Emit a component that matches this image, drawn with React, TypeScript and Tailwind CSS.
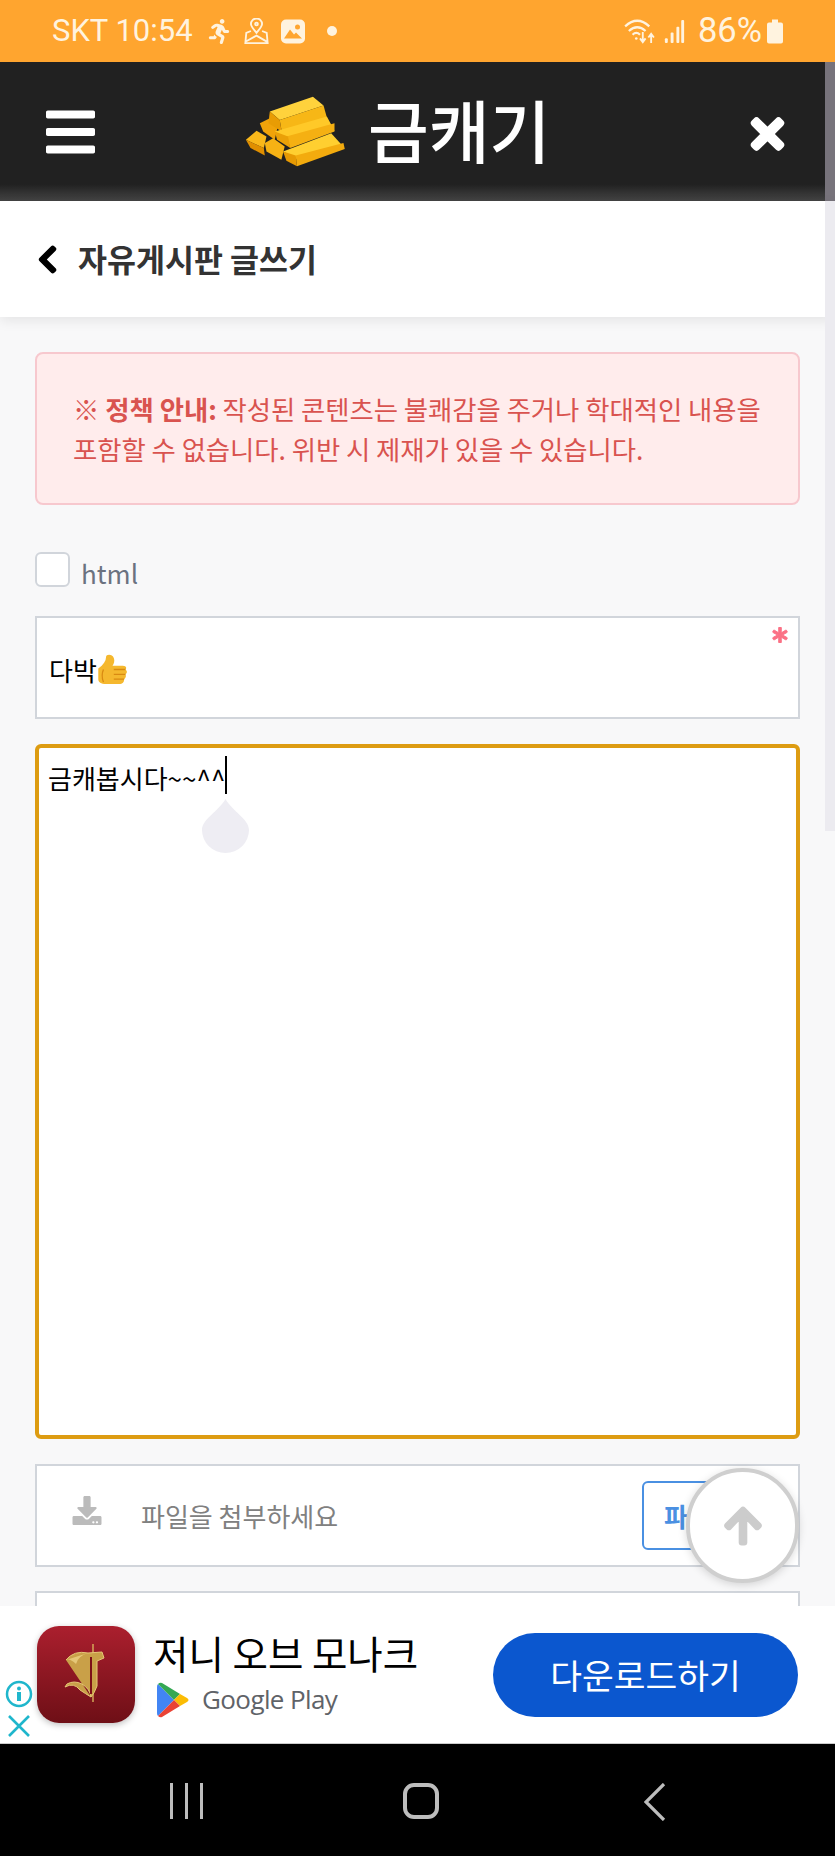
import { FaArrowUp, FaAsterisk, FaBars, FaChevronLeft, FaDownload, FaRunning, FaTimes } from 'react-icons/fa'

function GoldBars() {
  return (
    <svg viewBox="70 80 315 220" className="w-[105px] h-[73px]">
      {/* back left small bars */}
      <polygon points="120,165 150,150 175,170 165,215 130,190" fill="#f0a30a" />
      <polygon points="78,215 110,188 140,205 132,240" fill="#f9b81a" />
      <polygon points="78,215 132,240 135,262 92,240" fill="#e08f00" />
      <polygon points="135,225 160,210 195,235 185,275 140,250" fill="#f6b214" />
      {/* top bar */}
      <polygon points="150,130 280,85 312,112 180,155" fill="#ffd23c" />
      <polygon points="180,155 312,112 322,148 186,190" fill="#f7b716" />
      <polygon points="150,130 180,155 186,190 146,165" fill="#e89c04" />
      {/* middle bar */}
      <polygon points="165,190 322,145 345,188 210,225" fill="#ffc928" />
      <polygon points="200,205 345,165 345,190 212,240" fill="#f5b012" />
      <polygon points="165,190 205,205 212,240 172,215" fill="#eaa007" />
      {/* bottom bar */}
      <polygon points="190,250 335,195 372,236 232,272" fill="#ffcf30" />
      <polygon points="228,262 372,225 376,243 232,295" fill="#f3ab0e" />
      <polygon points="190,250 228,262 232,295 200,278" fill="#e79a03" />
    </svg>
  )
}

function ThumbsUp() {
  return (
    <svg viewBox="7 0 24 32" preserveAspectRatio="none" className="w-[31px] h-[31px]">
      <path d="M8 15 C12 11 14 7 14 3 C14 0 19 0 20 4 C21 7 20 10 19 12 L27 12 C30 12 30 15 29 16 C31 18 30 20 29 21 C30 23 29 25 28 26 C28 29 27 31 24 31 L14 31 C10 31 8 29 8 26 Z" fill="#f5b82e" />
      <path d="M20 16 H29 M20 21 H29 M20 26 H28" stroke="#d98a12" strokeWidth="1.4" fill="none" />
      <path d="M12 16 Q10 22 12 29" stroke="#d98a12" strokeWidth="1" fill="none" />
    </svg>
  )
}

function PlayLogo() {
  return (
    <svg viewBox="0 0 32 36" className="w-[32px] h-[36px]">
      <path d="M1 2 L17 18 L1 34 Q0 33 0 31 L0 5 Q0 3 1 2 Z" fill="#4285f4" />
      <path d="M1 2 Q3 0 5 1 L23 12 L17 18 Z" fill="#34a853" />
      <path d="M23 12 L30 16 Q33 18 30 20 L23 24 L17 18 Z" fill="#fbbc04" />
      <path d="M1 34 Q3 36 5 35 L23 24 L17 18 Z" fill="#ea4335" />
    </svg>
  )
}

export default function App() {
  return (
    <div className="relative w-[835px] h-[1856px] overflow-hidden flex flex-col bg-[#f8f8f9] font-['Noto_Sans_CJK_KR','Noto_Sans',sans-serif]">
      {/* status bar */}
      <div className="h-[62px] shrink-0 bg-[#ffa52f] flex items-center pl-[52px] pr-[52px] text-[#fff3df] font-['Roboto','Noto_Sans_CJK_KR',sans-serif] text-[31px]">
        <span>SKT 10:54</span>
        <FaRunning className="ml-[15px] w-[22px] h-[25px]" />
        <svg viewBox="0 0 26 28" className="ml-[14px] w-[25px] h-[26px]" fill="none" stroke="currentColor" strokeWidth="2">
          <path d="M13 16 C9 11 7 9 7 6.5 A6 6 0 0 1 19 6.5 C19 9 17 11 13 16 Z" />
          <circle cx="13" cy="6.5" r="1.5" />
          <path d="M7 14 L2 16 L1 27 H25 L24 16 L19 14 M2 25 L13 19 L25 26" />
        </svg>
        <svg viewBox="0 0 24 24" className="ml-[12px] w-[24px] h-[25px]">
          <rect width="24" height="24" rx="5" fill="currentColor" />
          <circle cx="16.5" cy="7.5" r="2.5" fill="#ffa52f" />
          <path d="M3 19 L9 10 L13 15 L15 13 L21 19 Z" fill="#ffa52f" />
        </svg>
        <span className="ml-[22px] w-[10px] h-[10px] rounded-full bg-current" />
        <svg viewBox="0 0 34 28" className="ml-auto w-[34px] h-[26px]" fill="none" stroke="currentColor" strokeWidth="2.4">
          <path d="M1 9 Q14 -3 27 9" />
          <path d="M5 14 Q14 6 23 14" />
          <path d="M9 18 Q13 14 17 18" />
          <circle cx="13" cy="22" r="1.4" fill="currentColor" stroke="none" />
          <path d="M20 15 V25 M17 22 L20 26 L23 22 M29 27 V18 M26 21 L29 17 L32 21" strokeWidth="2" />
        </svg>
        <svg viewBox="0 0 20 26" className="ml-[7px] w-[21px] h-[25px]" fill="currentColor">
          <rect x="0" y="20" width="3" height="5" rx="1" />
          <rect x="6" y="14" width="3" height="11" rx="1" />
          <rect x="12" y="8" width="3" height="17" rx="1" />
          <rect x="17" y="1" width="3" height="24" rx="1" />
        </svg>
        <span className="ml-[13px] text-[34.5px]">86%</span>
        <svg viewBox="0 0 16 24" className="ml-[5px] w-[16px] h-[25px]" fill="currentColor">
          <path d="M5 0 H11 V3 H14 Q16 3 16 5 V22 Q16 24 14 24 H2 Q0 24 0 22 V5 Q0 3 2 3 H5 Z" />
        </svg>
      </div>

      {/* site header */}
      <div className="h-[139px] shrink-0 flex items-center pl-[46px] pr-[50px] text-white bg-[linear-gradient(#212121_0,#212121_88%,#444444_100%)]">
        <FaBars className="w-[49px] h-[56px]" />
        <div className="ml-[148px] flex items-center gap-[20px]">
          <GoldBars />
          <span className="text-[66px] leading-none font-medium scale-y-[1.04] -mt-[8px]">금캐기</span>
        </div>
        <FaTimes className="ml-auto mt-[4px] w-[35px] h-[46px] stroke-current stroke-[20]" />
      </div>

      {/* page title */}
      <div className="h-[116px] shrink-0 bg-white flex items-center pl-[36px] gap-[19px] shadow-[0_4px_12px_rgba(0,0,0,0.08)] z-10">
        <FaChevronLeft className="w-[23px] h-[31px] text-black stroke-current stroke-[25]" />
        <span className="text-[31.5px] font-bold text-[#333333] leading-none">자유게시판 글쓰기</span>
      </div>

      {/* form */}
      <div className="flex-1 min-h-0 overflow-hidden px-[35px] pt-[35px]">
        <div className="h-[153px] rounded-[8px] border-2 border-[#f7c8ce] bg-[#ffecec] pl-[36px] pr-[20px] flex flex-col justify-center text-[26.4px] leading-[40px] text-[#d9534f] tracking-[-0.05px]">
          <p>
            <b className="font-bold">※ 정책 안내:</b> 작성된 콘텐츠는 불쾌감을 주거나 학대적인 내용을
          </p>
          <p>포함할 수 없습니다. 위반 시 제재가 있을 수 있습니다.</p>
        </div>

        <div className="mt-[47px] h-[35px] flex items-center gap-[11px]">
          <span className="w-[35px] h-[35px] rounded-[6px] border-2 border-[#d1d5db] bg-white" />
          <span className="text-[26px] text-[#6b7280] leading-none mt-[6px]">html</span>
        </div>

        <div className="relative mt-[29px] h-[103px] border-2 border-[#d1d5db] bg-white flex items-center pl-[12px] pt-[4px] text-[26px] text-black">
          다박
          <ThumbsUp />
          <FaAsterisk className="absolute right-[10px] top-[9px] w-[16px] h-[16px] text-[#fb7185] stroke-current stroke-[30]" />
        </div>

        <div className="relative mt-[25px] h-[695px] rounded-[6px] border-4 border-[#dd9c12] bg-white pl-[9px] pt-[11px] text-[26px] leading-[38px] text-black">
          <span>금캐봅시다~~^^</span>
          <span className="inline-block align-top -mt-[3px] w-[2px] h-[38px] bg-black" />
          {/* text selection handle */}
          <svg viewBox="0 0 47 54" className="absolute left-[163px] top-[51px] w-[47px] h-[54px]">
            <path d="M23.5 0 C30 12 47 20 47 31 A23.5 23 0 0 1 0 31 C0 20 17 12 23.5 0 Z" fill="#eeedf3" />
          </svg>
        </div>

        <div className="mt-[25px] h-[103px] border-2 border-[#d1d5db] bg-white flex items-center pl-[34px] text-[26px] text-[#808080]">
          <FaDownload className="w-[32px] h-[29px] text-[#bbbbbb] mb-[11px]" />
          <span className="ml-[38px]">파일을 첨부하세요</span>
          <span className="ml-auto mr-[34px] h-[69px] w-[122px] rounded-[6px] border-2 border-[#4a90e2] flex items-center pl-[20px] text-[#4a90e2] font-bold">
            파일
          </span>
        </div>

        <div className="mt-[24px] h-[103px] border-2 border-[#d1d5db] bg-white" />
      </div>

      {/* ad banner */}
      <div className="h-[138px] shrink-0 bg-white border-b border-[#cccccc] flex items-center pr-[37px] z-10">
        <div className="w-[37px] self-end shrink-0 flex flex-col items-center pb-[6px] text-[#1fb6cc]">
          <svg viewBox="0 0 28 28" className="w-[28px] h-[28px]" fill="none" stroke="currentColor" strokeWidth="2.5">
            <circle cx="14" cy="14" r="12" />
            <circle cx="14" cy="8.5" r="2" fill="currentColor" stroke="none" />
            <path d="M14 12 V21" strokeWidth="4" />
          </svg>
          <svg viewBox="0 0 22 22" className="mt-[7px] w-[22px] h-[22px]" fill="none" stroke="currentColor" strokeWidth="2.6">
            <path d="M1 1 L21 21 M21 1 L1 21" />
          </svg>
        </div>
        <div className="w-[98px] h-[97px] shrink-0 rounded-[22px] bg-[linear-gradient(#ab1f2e,#6e0f16)] shadow-[0_2px_6px_rgba(0,0,0,0.25)] flex items-center justify-center">
          <svg viewBox="0 0 44 62" className="w-[44px] h-[62px]" fill="none">
            <path d="M29 0 V58" stroke="#d9b25c" strokeWidth="1.4" />
            <path d="M2 16 Q10 6 24 9 L38 8 L40 14 L33 17 V42 Q30 50 27 53 Q26 45 18 40 Q10 36 3 40 L1 43 Q10 38 16 46 Q22 50 27 53" fill="#c9a048" stroke="#e5c777" strokeWidth="1" />
            <path d="M2 16 Q6 14 12 20 Q14 12 24 9" fill="#e5c777" />
            <path d="M26 13 H28 V50 H26 Z" fill="#7d1018" />
          </svg>
        </div>
        <div className="ml-[18px] flex flex-col">
          <span className="text-[38.5px] leading-[44px] text-black whitespace-nowrap">저니 오브 모나크</span>
          <div className="mt-[6px] ml-[4px] flex items-center gap-[13px]">
            <PlayLogo />
            <span className="font-['Open_Sans',sans-serif] text-[26px] font-medium tracking-[-0.6px] text-[#5f6368]">Google Play</span>
          </div>
        </div>
        <div className="ml-auto w-[305px] h-[84px] rounded-full bg-[#0b57cf] flex items-center justify-center text-white text-[34.5px] leading-none">
          다운로드하기
        </div>
      </div>

      {/* android nav bar */}
      <div className="h-[112px] shrink-0 bg-black flex items-start pt-[39px] pl-[170px] text-[#bdbdbd]">
        <div className="w-[33px] h-[36px] flex justify-between">
          <span className="w-[3px] bg-current" />
          <span className="w-[3px] bg-current" />
          <span className="w-[3px] bg-current" />
        </div>
        <span className="ml-[200px] w-[36px] h-[36px] rounded-[11px] border-[4px] border-current" />
        <svg viewBox="0 0 22 38" className="ml-[205px] w-[22px] h-[38px]" fill="none" stroke="currentColor" strokeWidth="3.2">
          <path d="M20 1 L2 19 L20 37" />
        </svg>
      </div>

      {/* page scrollbar */}
      <div className="absolute right-0 top-[62px] w-[10px] h-[139px] bg-[#77737b]" />
      <div className="absolute right-0 top-[201px] w-[10px] h-[630px] bg-[#ecebf0] z-20" />

      {/* scroll to top */}
      <div className="absolute left-[686px] top-[1468px] w-[113px] h-[115px] rounded-full border-4 border-[#cfcfcf] bg-white shadow-[0_2px_8px_rgba(0,0,0,0.15)] flex items-center justify-center">
        <FaArrowUp className="w-[42px] h-[42px] text-[#cccccc] stroke-current stroke-[25]" />
      </div>
    </div>
  )
}
